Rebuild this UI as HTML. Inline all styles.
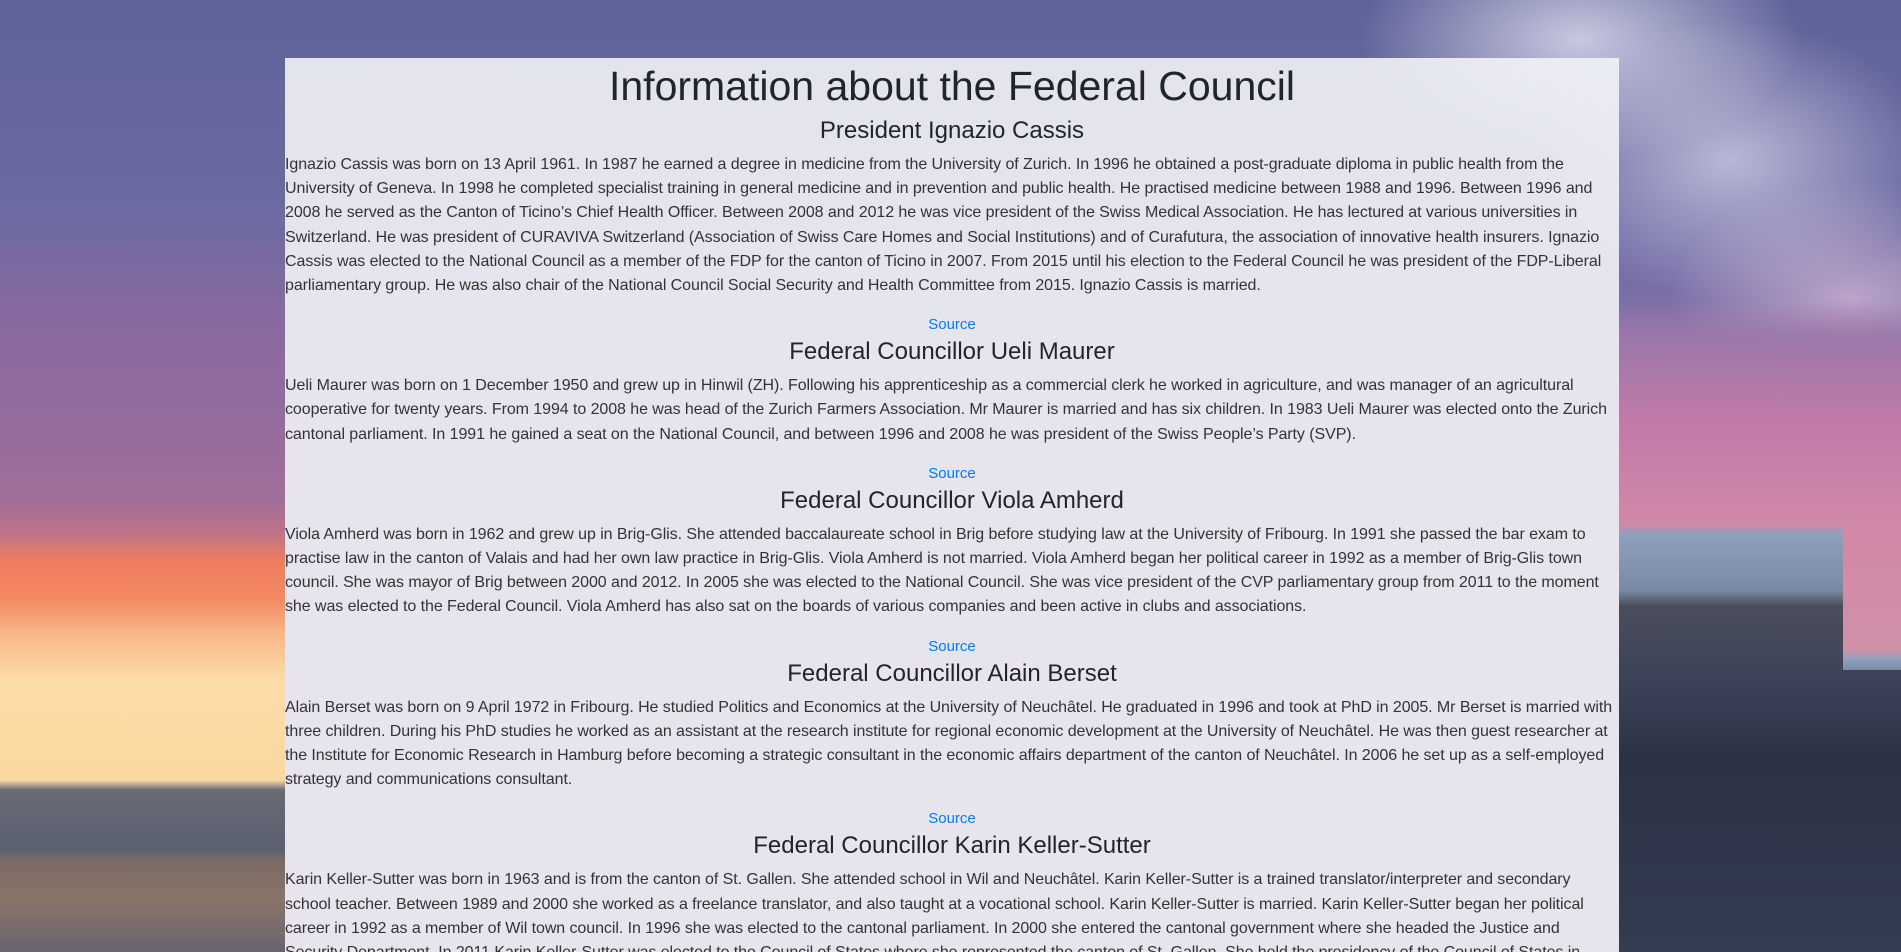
<!DOCTYPE html>
<html><head><meta charset="utf-8">
<style>
html,body{margin:0;padding:0;width:1901px;height:952px;overflow:hidden;background:#5d6397;}
body{font-family:"Liberation Sans",sans-serif;position:relative;}
.bg{position:absolute;top:0;left:0;width:1901px;height:952px;
background:linear-gradient(to bottom,#5f6399 0px,#6a6ba2 200px,#7e70a8 320px,#8a6aa0 420px,#8e6898 480px);}
.clouds{position:absolute;top:0;left:1250px;width:651px;height:420px;
background:
 radial-gradient(ellipse 220px 120px at 330px 40px, rgba(225,225,240,0.8), rgba(225,225,240,0) 100%),
 radial-gradient(ellipse 200px 140px at 480px 160px, rgba(220,215,238,0.7), rgba(220,215,238,0) 100%),
 radial-gradient(ellipse 180px 120px at 600px 300px, rgba(230,200,225,0.6), rgba(230,200,225,0) 100%);}
.left{position:absolute;left:0;top:0;width:285px;height:952px;
background:linear-gradient(to bottom,#5f6399 0px,#6a6aa2 200px,#8a6aa0 330px,#946c9e 420px,#a06e98 500px,#c07488 535px,#f07c60 560px,#f48a62 600px,#f8b888 635px,#fcdca8 680px,#fcd8a0 780px,#6a6a74 790px,#5a6070 850px,#7a6a66 860px,#8a7468 900px,#6a6470 952px);}
.right{position:absolute;left:1619px;top:0;width:282px;height:952px;
background:linear-gradient(to bottom,rgba(0,0,0,0) 0px,rgba(0,0,0,0) 300px,#9c78aa 340px,#c07aa8 420px,#d088a8 525px,#8da0bc 535px,#7a8aa4 590px,#4a4e5c 606px,#3c4258 680px,#2c3246 760px,#343c52 952px);}
.rightlow{position:absolute;left:1843px;top:520px;width:58px;height:150px;background:linear-gradient(to bottom,#d088a8,#d090a8 130px,#8da0bc 140px,#7a8aa4);}
.panel{position:absolute;left:285px;top:58px;width:1334px;height:900px;background:rgba(241,242,246,0.9);color:#212529;}
h1{font-size:41px;font-weight:500;text-align:center;margin:4px 0 6px;line-height:48px;}
h3{font-size:24px;font-weight:500;text-align:center;margin:0 0 7px;line-height:30px;}
p{font-size:16px;line-height:24.2px;margin:0 0 15px;color:#333;white-space:nowrap;letter-spacing:-0.07px;}
.src{text-align:center;font-size:15px;line-height:24px;}
.src a{color:#007bff;text-decoration:none;}
</style></head><body>
<div class="bg"></div>
<div class="clouds"></div>
<div class="left"></div>
<div class="right"></div>
<div class="rightlow"></div>
<div class="panel">
<h1>Information about the Federal Council</h1>
<h3>President Ignazio Cassis</h3>
<p>Ignazio Cassis was born on 13 April 1961. In 1987 he earned a degree in medicine from the University of Zurich. In 1996 he obtained a post-graduate diploma in public health from the<br>University of Geneva. In 1998 he completed specialist training in general medicine and in prevention and public health. He practised medicine between 1988 and 1996. Between 1996 and<br>2008 he served as the Canton of Ticino’s Chief Health Officer. Between 2008 and 2012 he was vice president of the Swiss Medical Association. He has lectured at various universities in<br>Switzerland. He was president of CURAVIVA Switzerland (Association of Swiss Care Homes and Social Institutions) and of Curafutura, the association of innovative health insurers. Ignazio<br>Cassis was elected to the National Council as a member of the FDP for the canton of Ticino in 2007. From 2015 until his election to the Federal Council he was president of the FDP-Liberal<br>parliamentary group. He was also chair of the National Council Social Security and Health Committee from 2015. Ignazio Cassis is married.</p>
<div class="src"><a>Source</a></div>
<h3>Federal Councillor Ueli Maurer</h3>
<p>Ueli Maurer was born on 1 December 1950 and grew up in Hinwil (ZH). Following his apprenticeship as a commercial clerk he worked in agriculture, and was manager of an agricultural<br>cooperative for twenty years. From 1994 to 2008 he was head of the Zurich Farmers Association. Mr Maurer is married and has six children. In 1983 Ueli Maurer was elected onto the Zurich<br>cantonal parliament. In 1991 he gained a seat on the National Council, and between 1996 and 2008 he was president of the Swiss People’s Party (SVP).</p>
<div class="src"><a>Source</a></div>
<h3>Federal Councillor Viola Amherd</h3>
<p>Viola Amherd was born in 1962 and grew up in Brig-Glis. She attended baccalaureate school in Brig before studying law at the University of Fribourg. In 1991 she passed the bar exam to<br>practise law in the canton of Valais and had her own law practice in Brig-Glis. Viola Amherd is not married. Viola Amherd began her political career in 1992 as a member of Brig-Glis town<br>council. She was mayor of Brig between 2000 and 2012. In 2005 she was elected to the National Council. She was vice president of the CVP parliamentary group from 2011 to the moment<br>she was elected to the Federal Council. Viola Amherd has also sat on the boards of various companies and been active in clubs and associations.</p>
<div class="src"><a>Source</a></div>
<h3>Federal Councillor Alain Berset</h3>
<p>Alain Berset was born on 9 April 1972 in Fribourg. He studied Politics and Economics at the University of Neuchâtel. He graduated in 1996 and took at PhD in 2005. Mr Berset is married with<br>three children. During his PhD studies he worked as an assistant at the research institute for regional economic development at the University of Neuchâtel. He was then guest researcher at<br>the Institute for Economic Research in Hamburg before becoming a strategic consultant in the economic affairs department of the canton of Neuchâtel. In 2006 he set up as a self-employed<br>strategy and communications consultant.</p>
<div class="src"><a>Source</a></div>
<h3>Federal Councillor Karin Keller-Sutter</h3>
<p>Karin Keller-Sutter was born in 1963 and is from the canton of St. Gallen. She attended school in Wil and Neuchâtel. Karin Keller-Sutter is a trained translator/interpreter and secondary<br>school teacher. Between 1989 and 2000 she worked as a freelance translator, and also taught at a vocational school. Karin Keller-Sutter is married. Karin Keller-Sutter began her political<br>career in 1992 as a member of Wil town council. In 1996 she was elected to the cantonal parliament. In 2000 she entered the cantonal government where she headed the Justice and<br>Security Department. In 2011 Karin Keller-Sutter was elected to the Council of States where she represented the canton of St. Gallen. She held the presidency of the Council of States in</p>
</div>
</body></html>
